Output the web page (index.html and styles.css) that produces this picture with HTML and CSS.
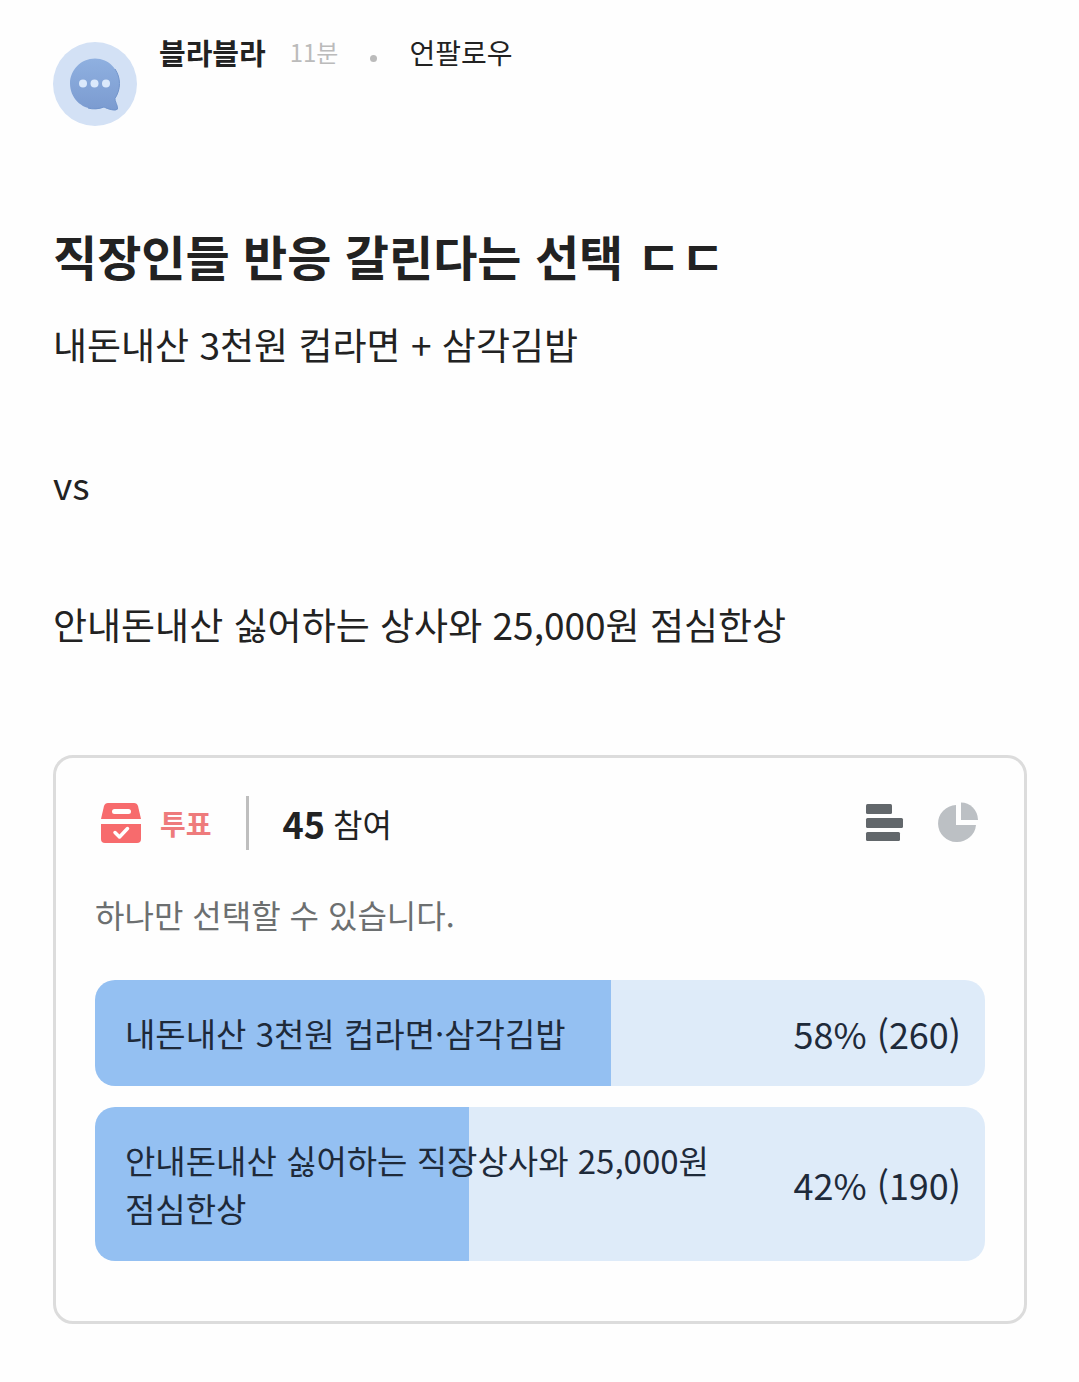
FILE: index.html
```html
<!DOCTYPE html>
<html lang="ko">
<head>
<meta charset="utf-8">
<meta name="viewport" content="width=device-width, initial-scale=1">
<title>직장인들 반응 갈린다는 선택 ㄷㄷ</title>
<link rel="stylesheet" href="styles.css">
</head>
<body>
<main class="post">
  <header class="author">
    <svg class="avatar" viewBox="0 0 84 84" aria-hidden="true">
      <defs>
        <linearGradient id="bubble" x1="0" y1="0" x2="0" y2="1">
          <stop offset="0" stop-color="#8fb0e0"/>
          <stop offset="1" stop-color="#7b9bd0"/>
        </linearGradient>
      </defs>
      <circle cx="42" cy="42" r="42" fill="#d3e1f5"/>
      <path d="M42 16.500C56 16.500 66.500 28 66.500 41.500C66.500 48 64.500 52.500 62 56.500C61.500 59 65 63.500 64.500 67C63.500 70 55 67.500 51 65C48 66.500 45 67 42 67C28 67 17 55.500 17 41.500C17 28 28 16.500 42 16.500Z" fill="url(#bubble)"/>
      <path d="M62 27C68 36 68 47 62 56.500C61.500 59 65 63.500 64.500 67C62 69 56 67.500 51 65C46 67 40 67.500 35 66" fill="none" stroke="#7295cc" stroke-width="1"/>
      <g fill="#dbe9fb"><circle cx="30" cy="41.500" r="4"/><circle cx="41.500" cy="41.500" r="4"/><circle cx="53" cy="41.500" r="4"/></g>
    </svg>
    <div class="byline">
      <span class="name">블라블라</span>
      <span class="time">11분</span>
      <span class="dot"></span>
      <button class="follow" type="button">언팔로우</button>
    </div>
  </header>

  <h1 class="title">직장인들 반응 갈린다는 선택 ㄷㄷ</h1>
  <div class="content">
    <p>내돈내산 3천원 컵라면 + 삼각김밥</p>
    <p>vs</p>
    <p>안내돈내산 싫어하는 상사와 25,000원 점심한상</p>
  </div>

  <section class="poll">
    <div class="poll-head">
      <svg class="ballot" viewBox="0 0 42 42" aria-hidden="true">
        <path d="M8 1H34Q37 1 38 4L41 17H1L4 4Q5 1 8 1Z" fill="#f76b6d"/>
        <rect x="12" y="7" width="19" height="5" rx="2.500" fill="#fff"/>
        <path d="M1 22H41V37Q41 41 37 41H5Q1 41 1 37Z" fill="#f76b6d"/>
        <path d="M15 30.500L19.500 35L27.500 26.500" fill="none" stroke="#fff" stroke-width="3.500" stroke-linecap="round" stroke-linejoin="round"/>
      </svg>
      <h2 class="poll-name">투표</h2>
      <span class="divider"></span>
      <p class="joined"><strong>45</strong><span>참여</span></p>
      <div class="views">
        <button class="view" type="button" aria-label="막대 그래프">
          <svg viewBox="0 0 42 42" fill="#62676b"><rect x="2" y="2" width="26" height="10" rx="1.500"/><rect x="2" y="16" width="37" height="10" rx="1.500"/><rect x="2" y="30" width="34" height="9" rx="1.500"/></svg>
        </button>
        <button class="view" type="button" aria-label="원 그래프">
          <svg viewBox="0 0 42 42" fill="#bcc0c4"><path d="M18 3V23H38A19 18.500 0 1 1 18 3Z"/><path d="M23 0.500A17 18 0 0 1 40 18H23Z"/></svg>
        </button>
      </div>
    </div>
    <p class="hint">하나만 선택할 수 있습니다.</p>
    <div class="options">
      <button class="option" type="button" style="--share: 58%">
        <span class="label">내돈내산 3천원 컵라면·삼각김밥</span>
        <span class="result">58% (260)</span>
      </button>
      <button class="option" type="button" style="--share: 42%">
        <span class="label">안내돈내산 싫어하는 직장상사와 25,000원 점심한상</span>
        <span class="result">42% (190)</span>
      </button>
    </div>
  </section>
</main>
</body>
</html>
```
FILE: styles.css
```css
* {
  box-sizing: border-box;
}

body {
  margin: 0;
  background: #fefefe;
  color: #222;
  font-family: "Noto Sans CJK KR", sans-serif;
  word-break: keep-all;
}

h1, h2, p {
  margin: 0;
}

button {
  padding: 0;
  border: 0;
  background: none;
  color: inherit;
  font: inherit;
  cursor: pointer;
}

.post {
  padding: 32px 52px 58px 53px;
}

.author {
  display: flex;
  gap: 22px;
}

.avatar {
  flex: none;
  width: 84px;
  height: 84px;
  margin-top: 10px;
}

.byline {
  display: flex;
  align-items: center;
  height: 40px;
  font-size: 28px;
  line-height: 40px;
}

.name {
  font-size: 29px;
  font-weight: 700;
}

.time {
  margin-left: 24px;
  color: #bbb;
  font-size: 24px;
}

.dot {
  width: 7px;
  height: 7px;
  margin: 12px 32px 0;
  border-radius: 50%;
  background: #bbb;
}

.title {
  margin-top: 93px;
  font-size: 48px;
  font-weight: 700;
  line-height: 72px;
}

.content {
  display: flex;
  flex-direction: column;
  gap: 88px;
  margin-top: 27px;
  font-size: 37px;
  line-height: 52px;
}

.poll {
  margin-top: 105px;
  padding: 38px 39px 60px;
  border: 3px solid #dcdcdc;
  border-radius: 20px;
}

.poll-head {
  display: flex;
  align-items: center;
  padding: 0 5px;
}

.ballot {
  width: 42px;
  height: 42px;
}

.poll-name {
  margin-left: 18px;
  color: #ee7b7c;
  font-size: 28px;
  font-weight: 700;
  line-height: 54px;
}

.divider {
  width: 3px;
  height: 54px;
  margin: 0 34px;
  background: #bebebe;
}

.joined {
  display: flex;
  align-items: center;
  gap: 8px;
  font-size: 32px;
  line-height: 54px;
}

.joined strong {
  font-size: 36px;
}

.views {
  display: flex;
  gap: 32px;
  margin-left: auto;
}

.view {
  width: 42px;
  height: 42px;
}

.view svg {
  display: block;
}

.hint {
  margin-top: 40px;
  color: #6c6f70;
  font-size: 32px;
  line-height: 48px;
}

.options {
  display: flex;
  flex-direction: column;
  gap: 21px;
  margin-top: 42px;
}

.option {
  display: flex;
  align-items: center;
  justify-content: space-between;
  gap: 32px;
  padding: 29px 24px 29px 30px;
  border-radius: 20px;
  background: linear-gradient(to right, #94c0f2 var(--share), #deebf9 var(--share));
  color: #1e2a3a;
  font-size: 33px;
  line-height: 48px;
  text-align: left;
}

.result {
  flex: none;
  font-size: 36px;
}
```
